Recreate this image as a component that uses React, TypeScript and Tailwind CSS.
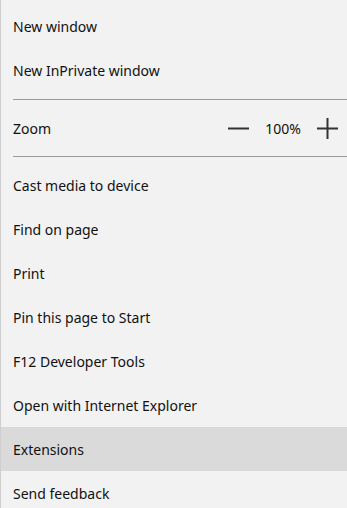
const topItems = ["New window", "New InPrivate window"];
const items = [
  "Cast media to device",
  "Find on page",
  "Print",
  "Pin this page to Start",
  "F12 Developer Tools",
  "Open with Internet Explorer",
  "Extensions",
  "Send feedback",
];

function Row({ label, active }: { label: string; active?: boolean }) {
  return (
    <div
      className={`h-11 flex items-center pl-3 ${active ? "bg-[#dadada]" : ""}`}
    >
      {label}
    </div>
  );
}

export default function App() {
  return (
    <div className="w-[347px] h-[508px] overflow-hidden bg-[#f2f2f2] border-l border-[#cfcfcf] text-[14px] text-[#111] font-['Segoe_UI','Noto_Sans',sans-serif]">
      <div className="pt-1">
        {topItems.map((t) => (
          <Row key={t} label={t} />
        ))}
      </div>

      <div className="ml-3 mt-[7px] h-px bg-[#9a9a9a]" />

      {/* Zoom */}
      <div className="mt-[7px] h-[42px] flex items-center pl-3 pr-[9px]">
        <span className="flex-1">Zoom</span>
        <svg width="21" height="21" viewBox="0 0 21 21" className="text-[#333]">
          <path d="M0 10.5h21" stroke="currentColor" strokeWidth="2" />
        </svg>
        <span className="w-[36px] mx-[16px] text-center">100%</span>
        <svg width="21" height="21" viewBox="0 0 21 21" className="text-[#333]">
          <path d="M0 10.5h21M10.5 0v21" stroke="currentColor" strokeWidth="2" />
        </svg>
      </div>

      <div className="ml-3 mt-[7px] mb-[6px] h-px bg-[#9a9a9a]" />

      {items.map((t) => (
        <Row key={t} label={t} active={t === "Extensions"} />
      ))}
    </div>
  );
}
